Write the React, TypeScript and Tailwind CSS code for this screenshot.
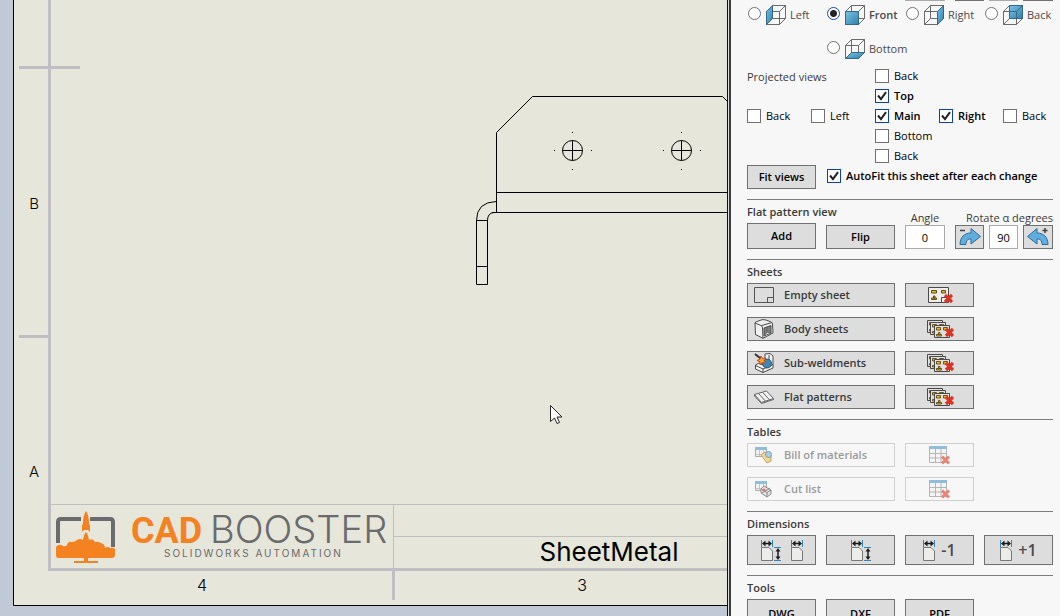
import React from "react";

type Face = "left" | "front" | "right" | "back" | "bottom";

const FACES: Record<Face, string> = {
  left: "M0.5 6.5L6.5 0.5V13.5L0.5 19.5Z",
  front: "M0.5 6.5H13.5V19.5H0.5Z",
  right: "M13.5 6.5L19.5 0.5V13.5L13.5 19.5Z",
  back: "M6.5 0.5H19.5V13.5H6.5Z",
  bottom: "M0.5 19.5L6.5 13.5H19.5L13.5 19.5Z",
};

function Cube({ face }: { face: Face }) {
  const gradient = `face-${face}`;
  return (
    <svg width="20" height="20" viewBox="0 0 20 20" fill="none" aria-hidden="true">
      <defs>
        <linearGradient id={gradient} x1="0" y1="0" x2="1" y2="1">
          <stop offset="0" stopColor="#7cc3e6" />
          <stop offset="1" stopColor="#2f7fac" />
        </linearGradient>
      </defs>
      <path
        d="M0.5 6.5H13.5V19.5H0.5ZM6.5 0.5H19.5V13.5H6.5ZM0.5 6.5L6.5 0.5M13.5 6.5L19.5 0.5M0.5 19.5L6.5 13.5M13.5 19.5L19.5 13.5"
        stroke="#5a5a5a"
        strokeWidth="0.9"
      />
      <path d={FACES[face]} fill={`url(#${gradient})`} stroke="#2b6688" strokeWidth="0.9" />
      {face === "back" && <path d="M6.5 6.5H13.5V13.5M13.5 6.5L19.5 0.5" stroke="#3b6178" strokeWidth="0.9" />}
    </svg>
  );
}

function RadioView({ face, label, checked, className = "" }: { face: Face; label: string; checked?: boolean; className?: string }) {
  return (
    <label className={`flex h-6 items-center text-[#4a4a4a] ${className}`}>
      <input
        type="radio"
        name="main-view"
        defaultChecked={checked}
        className="mb-1 size-[13px] shrink-0 appearance-none rounded-full border border-[#707070] bg-white checked:border-[#1446b0] checked:bg-[radial-gradient(circle,#222_0_3px,#fff_4px)]"
      />
      <span className="mr-1 ml-[5px] shrink-0">
        <Cube face={face} />
      </span>
      <span className={checked ? "font-semibold" : ""}>{label}</span>
    </label>
  );
}

function Check({ label, checked, className = "" }: { label: string; checked?: boolean; className?: string }) {
  return (
    <label className={`flex h-5 items-center whitespace-nowrap text-black ${className}`}>
      <span className="relative mr-[5px] block size-[14px] shrink-0">
        <input
          type="checkbox"
          defaultChecked={checked}
          className="peer block size-[14px] appearance-none border border-[#707070] bg-white checked:border-[#0c3fb0]"
        />
        <svg
          viewBox="0 0 14 14"
          className="pointer-events-none absolute inset-0 hidden size-[14px] peer-checked:block"
          fill="none"
          stroke="#222"
          strokeWidth="2"
          aria-hidden="true"
        >
          <path d="M3 6.5L6 10.2L11 3.2" />
        </svg>
      </span>
      <span className={checked ? "font-semibold" : ""}>{label}</span>
    </label>
  );
}

function Btn({ children, className = "", disabled, label }: { children: React.ReactNode; className?: string; disabled?: boolean; label?: string }) {
  return (
    <button
      type="button"
      disabled={disabled}
      aria-label={label}
      className={`flex items-center border font-semibold ${
        disabled ? "border-[#d0d0d0] bg-[#f7f7f7] text-[#9a9a9a]" : "border-[#707070] bg-[#dddddd]"
      } ${className}`}
    >
      {children}
    </button>
  );
}

const Cross = ({ x, y, s = 8 }: { x: number; y: number; s?: number }) => (
  <path d={`M${x} ${y}l${s - 1} ${s - 1}M${x + s - 1} ${y}l${-(s - 1)} ${s - 1}`} stroke="#dc3423" strokeWidth="3.2" />
);

function SheetGlyph({ x, y }: { x: number; y: number }) {
  return (
    <g transform={`translate(${x} ${y})`}>
      <path d="M0.5 0.5H15.5V12.5H0.5Z" fill="#e0e0dc" stroke="#4a4a4a" />
      <path d="M2.5 2.5h4v2.5h-4zM9.500 2.5h4v2.5h-4zM2.5 9.500h5v1.500h-5zM4.500 7.500h1.500v2h-1.500z" fill="#f3b617" stroke="#5f4b16" strokeWidth="0.9" />
    </g>
  );
}

function DeleteSheet() {
  return (
    <svg width="26" height="18" viewBox="0 0 26 18" fill="none" aria-hidden="true">
      <path d="M1.5 1.5H21.5V16.5H1.5Z" fill="#eeeeec" stroke="#4a4a4a" />
      <path d="M14.5 16V11.5H19" stroke="#4a4a4a" />
      <path d="M4.5 4.5h5v2.5h-5zM14.5 4.5h4v2.5h-4zM4.5 12h5v1.500h-5zM6.500 10h1.500v2h-1.500z" fill="#f3b617" stroke="#5f4b16" />
      <Cross x={18} y={9} s={8} />
    </svg>
  );
}

function DeleteSheets() {
  return (
    <svg width="28" height="20" viewBox="0 0 28 20" fill="none" aria-hidden="true">
      <SheetGlyph x={1} y={1} />
      <SheetGlyph x={4} y={3} />
      <SheetGlyph x={8} y={6} />
      <Cross x={20} y={10} s={8} />
    </svg>
  );
}

function EmptySheetIcon() {
  return (
    <svg width="20" height="16" viewBox="0 0 20 16" fill="none" stroke="#555" aria-hidden="true">
      <path d="M0.5 0.5H19.5V15.5H0.5ZM13.5 15.5V10.5H19.5" />
    </svg>
  );
}

function BodyIcon() {
  return (
    <svg width="20" height="20" viewBox="0 0 20 20" fill="none" stroke="#4c4c4c" strokeLinejoin="round" aria-hidden="true">
      <path d="M1 4Q1 3 3 2.500L8 0.700Q10 0.500 12 1L17 3Q18.500 3.500 18.500 5L19 14L9 19.300L1.500 15.500Z" fill="#f0f0f0" />
      <path d="M1 4L7 6.500Q8.500 7 8.500 9L9 19.300M7.500 6.600L18 3.500" />
      <path d="M10 9L17 6.500V14L10 17Z" fill="#7d7d7d" />
      <path d="M10.500 16.500L13 13L16.500 13.800M13 13V8" fill="#dadada" stroke="#666" />
    </svg>
  );
}

function WeldIcon() {
  return (
    <svg width="20" height="20" viewBox="0 0 20 20" fill="none" strokeLinejoin="round" aria-hidden="true">
      <path d="M11 1L16 0.500L19 3V15L9 19.500L1.500 16V12L5 10L11 13Z" fill="#f4f4f4" stroke="#4a4a4a" />
      <path d="M1.500 12.500L9 16L19 11.500M9 16V19.500M15 2V7" stroke="#4a4a4a" />
      <circle cx="13" cy="10.500" r="4.500" fill="#3f87b4" stroke="#285a7c" />
      <path d="M7 3l1.500 2.500L12 5l-1.800 2.500L11.500 10.500 8.500 9.500 6 12V8.800L3 7.500l3-1.300z" fill="#f6a623" stroke="#c8481c" />
      <path d="M1 1L6 5" stroke="#333" strokeWidth="2" />
    </svg>
  );
}

function FlatIcon() {
  return (
    <svg width="20" height="14" viewBox="0 0 20 14" fill="#f0f0f0" stroke="#666" strokeLinejoin="round" aria-hidden="true">
      <path d="M0.5 4.5L12.5 1L19.5 8.5L7.5 12.5Z" />
      <path d="M4.5 3.5L11.5 11.200M8.500 2.300L15.500 9.800M0.500 4.500V6L7.500 13.500L19.500 9.500V8.500" fill="none" />
    </svg>
  );
}

function TableGrid({ w, h }: { w: number; h: number }) {
  return (
    <g>
      <path d={`M1.5 1.5H${w + 1.5}V${h + 1.5}H1.5Z`} fill="#f2f2f2" stroke="#a9a9a9" />
      <path d={`M1.5 8.5H${w + 1.5}M5.5 4V${h + 1.5}M9.5 4V${h + 1.5}`} stroke="#c3c3c3" />
      <path d={`M1 1H${w + 2}V4H1Z`} fill="#8fbddb" />
    </g>
  );
}

function BomIcon() {
  return (
    <svg width="20" height="18" viewBox="0 0 20 18" fill="none" aria-hidden="true">
      <TableGrid w={11} h={9} />
      <path d="M7 9L11 6L17 10V15L13 17L10 13Z" fill="#f2d98c" stroke="#bda66a" />
      <circle cx="14.5" cy="8.5" r="3" fill="#a9cde2" stroke="#7c9fb6" />
    </svg>
  );
}

function CutIcon() {
  return (
    <svg width="20" height="18" viewBox="0 0 20 18" fill="none" aria-hidden="true">
      <TableGrid w={11} h={9} />
      <path d="M7 9L10 6L17 10V14L13 17L7 13Z" fill="#e2e2e2" stroke="#8c8c8c" />
      <path d="M7 9L13 12.500L17 10M13 12.500V17M8 13L16 8" stroke="#8c8c8c" />
      <circle cx="10" cy="10" r="1.5" fill="#d9786b" />
    </svg>
  );
}

function DeleteTable() {
  return (
    <svg width="24" height="20" viewBox="0 0 24 20" fill="none" aria-hidden="true">
      <path d="M1.5 1.5H18.5V17.5H1.5Z" fill="#f4f4f4" stroke="#b5b5b5" />
      <path d="M1.5 8.5H18.5M1.5 13H18.5M7.5 4V17.5M13 4V17.5" stroke="#b5b5b5" />
      <path d="M1 1H19V4H1Z" fill="#8fbddb" />
      <path d="M14 11.500l7 7M21 11.500l-7 7" stroke="#ea8478" strokeWidth="3" />
    </svg>
  );
}

function WidthDim() {
  return (
    <g>
      <path d="M0.5 0V7M11.5 0V7" stroke="#2d86b5" />
      <path d="M1 3.5L4.5 0.5V6.5ZM11 3.5L7.5 0.5V6.5Z" fill="#1c1c1c" />
      <path d="M3 3.5H9" stroke="#1c1c1c" strokeWidth="1.5" />
      <path d="M0.5 7.5H8L11.5 11V20.5H0.5Z" fill="#ececea" stroke="#777" />
    </g>
  );
}

function HeightDim() {
  return (
    <g>
      <path d="M13 7.5H20M13 20.5H20" stroke="#2d86b5" />
      <path d="M17 8L19.5 11.5H14.5ZM17 20L19.5 16.5H14.5Z" fill="#1c1c1c" />
      <path d="M17 10V18" stroke="#1c1c1c" strokeWidth="1.5" />
    </g>
  );
}

function DimIcon({ height }: { height?: boolean }) {
  return (
    <svg width={height ? 20 : 12} height="21" viewBox={height ? "0 0 20 21" : "0 0 12 21"} fill="none" aria-hidden="true">
      <WidthDim />
      {height && <HeightDim />}
    </svg>
  );
}

function RotateIcon({ ccw }: { ccw?: boolean }) {
  return (
    <svg width="24" height="20" viewBox="0 0 24 20" fill="none" aria-hidden="true">
      <g transform={ccw ? "translate(24 0) scale(-1 1)" : undefined}>
        <path d="M2 17.500C2 10 6.500 6 13 6V1.500L22.500 9.500L13 17V12C9.500 12 8 13.500 8 17.500Z" fill="#5faede" stroke="#2f6f9c" strokeLinejoin="round" />
      </g>
      <path d={ccw ? "M16.5 3.5H21.5M19 1V6" : "M2 3.500H7"} stroke="#444" strokeWidth="1.5" />
    </svg>
  );
}

function Section({ title, children, className = "" }: { title: string; children: React.ReactNode; className?: string }) {
  return (
    <section className={`border-t border-[#7d7d7d] ${className}`}>
      <h2 className="mt-1 h-4 text-[11px] leading-4 font-semibold text-[#3a3a3a]">{title}</h2>
      {children}
    </section>
  );
}

const sheetRows = [
  { label: "Empty sheet", icon: <EmptySheetIcon />, del: <DeleteSheet /> },
  { label: "Body sheets", icon: <BodyIcon />, del: <DeleteSheets /> },
  { label: "Sub-weldments", icon: <WeldIcon />, del: <DeleteSheets /> },
  { label: "Flat patterns", icon: <FlatIcon />, del: <DeleteSheets /> },
];

const tableRows = [
  { label: "Bill of materials", icon: <BomIcon /> },
  { label: "Cut list", icon: <CutIcon /> },
];

function Rows({ rows, disabled }: { rows: { label: string; icon: React.ReactNode; del?: React.ReactNode }[]; disabled?: boolean }) {
  return (
    <div className="mt-[3px] flex flex-col gap-[10px]">
      {rows.map((r) => (
        <div key={r.label} className="grid grid-cols-[148px_69px] gap-[10px]">
          <Btn disabled={disabled} className={`h-6 pl-[6px] ${disabled ? "" : "text-[#3a3a3a]"}`}>
            <span className="mr-[10px] flex w-5 justify-center">{r.icon}</span>
            {r.label}
          </Btn>
          <Btn disabled={disabled} label={`Delete ${r.label}`} className="h-6 justify-center">
            {r.del ?? <DeleteTable />}
          </Btn>
        </div>
      ))}
    </div>
  );
}

function Panel() {
  return (
    <aside className="h-full w-[328px] shrink-0 overflow-hidden bg-[#f7f7f7] pr-[7px] pl-[15px] font-['Open_Sans','Noto_Sans',sans-serif] text-[11px] leading-4">
      <div className="flex h-[3px] justify-end gap-[5px]">
        <span className="h-px w-10 bg-[#aaa]" />
        <span className="ml-[5px] h-px w-[29px] bg-[#707070]" />
        <span className="h-px w-[29px] bg-[#aaa]" />
        <span className="h-px w-[30px] bg-[#707070]" />
      </div>
      <div className="grid grid-cols-[79px_79px_79px_auto] gap-y-[10px] pl-px">
        <RadioView face="left" label="Left" />
        <RadioView face="front" label="Front" checked />
        <RadioView face="right" label="Right" />
        <RadioView face="back" label="Back" />
        <RadioView face="bottom" label="Bottom" className="col-start-2" />
      </div>
      <div className="mt-[5px] grid grid-cols-[64px_64px_64px_64px_auto]">
        <span className="col-span-2 pt-[3px] whitespace-nowrap text-[#3a3a3a]">Projected views</span>
        <Check label="Back" className="col-start-3" />
        <Check label="Top" checked className="col-start-3" />
        <Check label="Back" className="col-start-1" />
        <Check label="Left" />
        <Check label="Main" checked />
        <Check label="Right" checked />
        <Check label="Back" />
        <Check label="Bottom" className="col-start-3" />
        <Check label="Back" className="col-start-3" />
      </div>
      <div className="flex gap-[11px]">
        <Btn className="-mt-px h-6 w-[69px] justify-center text-black">Fit views</Btn>
        <Check label="AutoFit this sheet after each change" checked />
      </div>

      <Section title="Flat pattern view" className="mt-[10px]">
        <div className="-mt-[9px] flex items-end leading-[14px]">
          <Btn className="h-[26px] w-[69px] justify-center text-black">Add</Btn>
          <Btn className="ml-[10px] h-6 w-[69px] justify-center text-black">Flip</Btn>
          <label className="ml-[10px] flex w-10 flex-col items-center text-[#3a3a3a]">
            Angle
            <input defaultValue="0" className="h-6 w-10 border border-[#aaa] bg-white text-center text-black" />
          </label>
          <div className="ml-[10px] flex flex-col">
            <label htmlFor="rotate" className="text-right whitespace-nowrap text-[#3a3a3a]">
              Rotate α degrees
            </label>
            <div className="flex gap-[5px]">
              <Btn label="Rotate clockwise" className="h-6 w-[29px] justify-center">
                <RotateIcon />
              </Btn>
              <input id="rotate" defaultValue="90" className="h-6 w-[29px] border border-[#aaa] bg-white text-center text-black" />
              <Btn label="Rotate counterclockwise" className="h-6 w-[30px] justify-center">
                <RotateIcon ccw />
              </Btn>
            </div>
          </div>
        </div>
      </Section>

      <Section title="Sheets" className="mt-[10px]">
        <Rows rows={sheetRows} />
      </Section>

      <Section title="Tables" className="mt-[10px]">
        <Rows rows={tableRows} disabled />
      </Section>

      <Section title="Dimensions" className="mt-[10px]">
        <div className="mt-[3px] flex gap-[10px] text-[16px] text-[#4a4a4a]">
          <Btn label="Height and width" className="h-[30px] w-[69px] justify-center gap-[10px]">
            <DimIcon height />
            <DimIcon />
          </Btn>
          <Btn label="Height" className="h-[30px] w-[69px] justify-center">
            <DimIcon height />
          </Btn>
          <Btn className="h-[30px] w-[69px] justify-center gap-[6px]">
            <DimIcon />
            -1
          </Btn>
          <Btn className="h-[30px] w-[69px] justify-center gap-[6px]">
            <DimIcon />
            +1
          </Btn>
        </div>
      </Section>

      <Section title="Tools" className="mt-[10px]">
        <div className="mt-[3px] flex gap-[10px] text-black">
          <Btn className="h-[30px] w-[69px] justify-center">DWG</Btn>
          <Btn className="h-[30px] w-[69px] justify-center">DXF</Btn>
          <Btn className="h-[30px] w-[69px] justify-center">PDF</Btn>
        </div>
      </Section>
    </aside>
  );
}

function Logo() {
  return (
    <g>
      <g fill="none" stroke="#6a6b6d" strokeWidth="4">
        <path d="M58 543V522Q58 519 61 519H81M90 519H110Q113 519 113 522V547" />
      </g>
      <path d="M86 511C88 514 89 518 89 523L90 526V532L88 530H84L82 532V526L83 523C83 518 84 514 86 511Z" fill="#f58220" />
      <path
        d="M56 547Q59 543 63 546Q66 547 67 545Q68 541 72 542Q75 542 77 540Q80 538 83 540Q84 534 86 532Q88 534 89 540Q93 538 95 542Q98 541 101 543Q105 544 105 548Q108 546 110 548Q114 547 115 549V556Q114 558 112 558H88V561H98V563H74V561H84V558H58Q56 558 56 555Z"
        fill="#f58220"
      />
      <text x="131" y="543" fontSize="36" fontWeight="700" fill="#f58220" className="font-['Roboto',sans-serif]">
        CAD
      </text>
      <text x="210" y="543" fontSize="38" fontWeight="300" fill="#6a6b6d" className="font-['Inter',sans-serif]">
        BOOSTER
      </text>
      <text x="164" y="557" fontSize="10" fill="#6a6b6d" className="font-['Inter',sans-serif] tracking-[2px]">
        SOLIDWORKS AUTOMATION
      </text>
    </g>
  );
}

const holes = [572.5, 681.5];

function Drawing() {
  return (
    <main className="relative h-full min-w-0 flex-1 overflow-hidden bg-[#c2c9d6]">
      <svg width="2000" height="616" viewBox="0 0 2000 616" fill="none" className="block max-w-none" role="img" aria-label="Sheet metal drawing">
        <path d="M13.5 -2H2002V605.5H13.5Z" fill="#e6e6da" stroke="#000" />
        <g stroke="#bfbec2" strokeWidth="3">
          <path d="M49.5 0V570M48 569.5H2000M19 67.5H80M19 336.5H50M393.5 569V600" />
          <path d="M50 504.5H2000M393.5 504V569M394 536.5H2000" strokeWidth="1" />
        </g>
        <g stroke="#000">
          <path d="M496.5 212V132.5L532.5 96.5H722.5L732 106M496.5 192.5H2000M492 212.5H2000" />
          <path d="M496.5 201.5Q476.5 202 476.5 220.5V284.5H487.5V220.5Q487.5 213 494 212.5M476.5 220.5H487.5M476.5 266.5H487.5" />
          {holes.map((x) => (
            <g key={x}>
              <circle cx={x} cy="150.5" r="10" />
              <path d={`M${x - 10} 150.5h20M${x} 140.5v20`} />
              <path d={`M${x - 18.5} 150.5h1M${x + 18.5} 150.5h1M${x - 0.5} 132.5h1M${x - 0.5} 169.5h1`} />
            </g>
          ))}
        </g>
        <g fill="#000" className="font-['Inter',sans-serif]" textAnchor="middle">
          <text x="34" y="209" fontSize="15" fontWeight="300">B</text>
          <text x="34" y="477" fontSize="15" fontWeight="300">A</text>
          <text x="202" y="591" fontSize="16" fontWeight="300">4</text>
          <text x="582" y="591" fontSize="16" fontWeight="300">3</text>
          <text x="609" y="561" fontSize="26">SheetMetal</text>
        </g>
        <Logo />
        <path d="M550.5 405.5V421.5L554.5 418L557 423.5L559.5 422.5L557 417H562Z" fill="#fff" stroke="#111" strokeWidth="0.9" />
      </svg>
    </main>
  );
}

export default function App() {
  return (
    <div className="flex h-screen w-full overflow-hidden">
      <Drawing />
      <div className="flex w-[5px] shrink-0 border-l border-[#111] bg-[#f7f7f7]">
        <span className="h-full w-px bg-[#dcdcdc]" />
        <span className="h-full w-[2px] bg-[#3c3c3c]" />
      </div>
      <Panel />
    </div>
  );
}
